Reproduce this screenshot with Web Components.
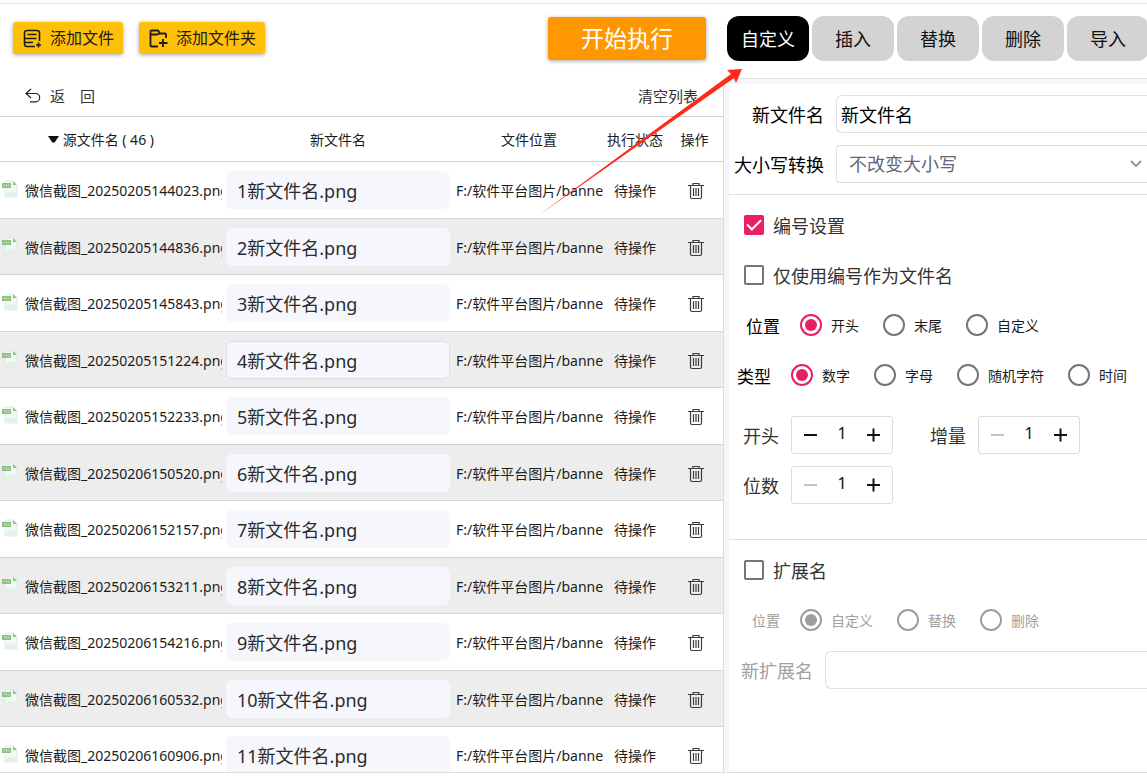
<!DOCTYPE html>
<html lang="zh-CN">
<head>
<meta charset="utf-8">
<meta name="viewport" content="width=device-width, initial-scale=1">
<title>批量重命名</title>
<style>
  body {
    margin: 0;
    overflow: hidden;
    background: #fff;
    color: #1c1c1c;
    font-family: "Noto Sans", "Noto Sans CJK SC", sans-serif;
    font-size: 14px;
  }
</style>
</head>
<body>
<rename-app></rename-app>

<script>
const FILES = [
  "20250205144023", "20250205144836", "20250205145843", "20250205151224",
  "20250205152233", "20250206150520", "20250206152157", "20250206153211",
  "20250206154216", "20250206160532", "20250206160906",
];

class ToolButton extends HTMLElement {
  connectedCallback() {
    this.attachShadow({mode: "open"});
    this.render();
  }

  render() {
    this.shadowRoot.innerHTML = `
      <style>
        :host {
          display: block;
        }

        button {
          display: flex;
          align-items: center;
          gap: 8px;
          height: 32px;
          padding: 0 9px 0 10px;
          border: 0;
          border-radius: 3px;
          background: #ffc107;
          box-shadow: 0 1px 4px rgba(0, 0, 0, .35);
          color: #1c1c1c;
          font: inherit;
          font-size: 16px;
          line-height: 24px;
          white-space: nowrap;
        }

        :host([variant="run"]) button {
          justify-content: center;
          width: 158px;
          height: 43px;
          padding: 0;
          background: #ff9800;
          color: #fff;
          font-size: 23px;
        }
      </style>
      <button type="button"><slot name="icon"></slot><slot></slot></button>
    `;
  }
}

class ModeTabs extends HTMLElement {
  connectedCallback() {
    this.attachShadow({mode: "open"});
    this.tabs = this.getAttribute("data-tabs").split(",");
    this.render();
  }

  render() {
    this.shadowRoot.innerHTML = `
      <style>
        :host {
          display: flex;
          gap: 3px;
        }

        button {
          flex: 0 0 82px;
          height: 45px;
          padding: 0 0 2px;
          border: 0;
          border-radius: 12px;
          background: #d3d3d3;
          color: #111;
          font: inherit;
          font-size: 18px;
        }

        button[aria-pressed="true"] {
          background: #000;
          color: #fff;
        }
      </style>
      ${this.tabs.map((tab, i) => `<button type="button" aria-pressed="${i === 0}">${tab}</button>`).join("")}
    `;
  }
}

class FileList extends HTMLElement {
  connectedCallback() {
    this.attachShadow({mode: "open"});
    this.render();
  }

  renderRow(stamp, index) {
    return `
      <tr>
        <td class="source">
          <div>
            <svg width="16" height="18" viewBox="0 0 16 18" aria-hidden="true">
              <path d="M3 1h8l4 4v12H3z" fill="#f3faf4" stroke="#d8e2d9" stroke-width=".7"/>
              <path d="M11 1v4h4z" fill="#8fc08f"/>
              <path d="M4 14l3-3 2 2 2-3 3 4v2H4z" fill="#e0f1e5"/>
              <path d="M0 3h9v5H0z" fill="#8dbf83"/>
              <path d="M2 6.500V4.500h1v1H2M4 6.500v-2l1 2v-2M7.500 4.500H6.300v2h1.200v-1" fill="none" stroke="#cfe6ca" stroke-width=".5"/>
            </svg>
            <span>微信截图_${stamp}.png</span>
          </div>
        </td>
        <td class="target"><input type="text" aria-label="新文件名" value="${index + 1}新文件名.png"></td>
        <td class="path"><div>F:/软件平台图片/banner</div></td>
        <td>待操作</td>
        <td class="remove">
          <button type="button" aria-label="删除">
            <svg width="16" height="18" viewBox="0 0 16 18" fill="none" stroke="#3c3c3c" aria-hidden="true">
              <path d="M0 3.500h16M5 3.500V1.500h6v2M2.500 3.500v11.500c0 1 .5 1.500 1.500 1.500h8c1 0 1.500-.5 1.500-1.500V3.500" stroke-width="1.200"/>
              <path d="M5.500 6v8M8 6v8M10.500 6v8" stroke-width="1.200"/>
            </svg>
          </button>
        </td>
      </tr>
    `;
  }

  render() {
    this.shadowRoot.innerHTML = `
      <style>
        :host {
          display: block;
          overflow: hidden;
        }

        .actions {
          display: flex;
          justify-content: space-between;
          align-items: center;
          box-sizing: border-box;
          height: 38px;
          padding: 0 25px 4px;
          border-bottom: 1px solid #d4d4d4;
        }

        button {
          display: inline-flex;
          align-items: center;
          gap: 9px;
          padding: 0;
          border: 0;
          background: none;
          color: #333;
          font: inherit;
          font-size: 15px;
          line-height: 18px;
          vertical-align: middle;
        }

        table {
          width: 100%;
          table-layout: fixed;
          border-collapse: separate;
          border-spacing: 0;
          line-height: 20px;
        }

        th,
        td {
          box-sizing: border-box;
          padding: 2px 0 0;
          border-bottom: 1px solid #d4d4d4;
          font-weight: normal;
          text-align: center;
          white-space: nowrap;
        }

        th {
          height: 45px;
        }

        th:first-child {
          padding-right: 20px;
        }

        tbody tr {
          height: 56px;
        }

        tbody tr:nth-child(odd) {
          height: 57px;
        }

        tbody tr:nth-child(even) {
          background: #ededed;
        }

        .source div {
          display: flex;
          align-items: center;
          gap: 7px;
          padding-left: 2px;
        }

        .source svg {
          flex: none;
          margin-bottom: 4px;
        }

        .source span {
          overflow: hidden;
          width: 197px;
          text-align: left;
        }

        .target {
          padding: 0 4px;
        }

        .target input {
          display: block;
          box-sizing: border-box;
          width: 100%;
          height: 38px;
          padding: 0 10px;
          border: 1px solid #f5f7fc;
          border-radius: 6px;
          background: #f5f7fc;
          color: #2b2b2b;
          font: inherit;
          font-size: 18px;
        }

        tr:nth-child(4) input {
          border-color: #dcdfe6;
        }

        .path {
          padding-left: 2px;
          text-align: left;
        }

        .path div {
          overflow: hidden;
        }

        .remove {
          padding: 0 0 0 2px;
        }
      </style>
      <div class="actions">
        <button type="button">
          <svg width="16" height="15" viewBox="0 0 16 15" fill="none" stroke="#222" stroke-width="1.200" aria-hidden="true">
            <path d="M6 1L1 5.500 6 10M1 5.500h9.500a4.200 4.200 0 0 1 0 8.400H5"/>
          </svg>返&emsp;回</button>
        <button type="button">清空列表</button>
      </div>
      <table>
        <colgroup>
          <col style="width: 222px"><col style="width: 232px"><col><col style="width: 62px"><col style="width: 57px">
        </colgroup>
        <thead>
          <tr>
            <th><svg width="11" height="9" viewBox="0 0 11 9" aria-hidden="true"><path d="M0 0h11L7 6q-1.500 1.500-3 0z" fill="#111"/></svg> 源文件名 ( 46 )</th>
            <th>新文件名</th>
            <th>文件位置</th>
            <th>执行状态</th>
            <th>操作</th>
          </tr>
        </thead>
        <tbody>${FILES.map((stamp, i) => this.renderRow(stamp, i)).join("")}</tbody>
      </table>
    `;
  }
}

class CheckOption extends HTMLElement {
  connectedCallback() {
    this.attachShadow({mode: "open"});
    this.render();
  }

  render() {
    this.shadowRoot.innerHTML = `
      <style>
        :host {
          display: flex;
          align-items: center;
          height: 50px;
          padding-left: 15px;
        }

        label {
          display: flex;
          align-items: center;
          gap: 9px;
          color: #333;
          font-size: 18px;
        }

        input {
          appearance: none;
          display: grid;
          place-items: center;
          box-sizing: border-box;
          width: 20px;
          height: 20px;
          margin: 0;
          border: 2px solid #757575;
          border-radius: 2px;
        }

        input:checked {
          border-color: #e91e63;
          background: #e91e63;
        }

        input:checked::before {
          content: "";
          width: 12px;
          height: 6px;
          margin-bottom: 4px;
          border: solid #fff;
          border-width: 0 0 2px 2px;
          transform: rotate(-45deg);
        }
      </style>
      <label><input type="checkbox" ${this.hasAttribute("checked") ? "checked" : ""}><slot></slot></label>
    `;
  }
}

class RadioRow extends HTMLElement {
  connectedCallback() {
    this.attachShadow({mode: "open"});
    this.options = this.getAttribute("data-options").split(",");
    this.render();
  }

  render() {
    const disabled = this.hasAttribute("disabled") ? "disabled" : "";
    this.shadowRoot.innerHTML = `
      <style>
        :host {
          display: block;
          padding-left: 8px;
        }

        :host([indent]) {
          padding-left: 17px;
        }

        :host([disabled]) {
          padding-left: 23px;
          color: #a0a0a0;
        }

        .row {
          display: flex;
          align-items: center;
          gap: 20px;
          height: 50px;
          white-space: nowrap;
        }

        .title {
          color: #000;
          font-size: 17px;
        }

        :host([disabled]) .title {
          color: inherit;
          font-size: 14px;
        }

        .options {
          display: flex;
          gap: 24px;
        }

        label {
          display: flex;
          align-items: center;
          gap: 9px;
        }

        input {
          --ring: #757575;
          appearance: none;
          display: grid;
          place-items: center;
          box-sizing: border-box;
          width: 22px;
          height: 22px;
          margin: 0;
          border: 2px solid var(--ring);
          border-radius: 50%;
        }

        input:checked {
          --ring: #e91e63;
        }

        input:disabled {
          --ring: #9e9e9e;
        }

        input:checked::before {
          content: "";
          width: 12px;
          height: 12px;
          border-radius: 50%;
          background: var(--ring);
        }
      </style>
      <div class="row" role="radiogroup" aria-labelledby="title">
        <span class="title" id="title"><slot></slot></span>
        <div class="options">
          ${this.options.map((option, i) => `
            <label><input type="radio" name="option" ${i === 0 ? "checked" : ""} ${disabled}>${option}</label>
          `).join("")}
        </div>
      </div>
    `;
  }
}

class NumberStepper extends HTMLElement {
  connectedCallback() {
    this.attachShadow({mode: "open"});
    this.render();
  }

  render() {
    this.shadowRoot.innerHTML = `
      <style>
        :host {
          display: flex;
          align-items: center;
          gap: 12px;
          height: 50px;
        }

        label {
          color: #333;
          font-size: 18px;
        }

        .box {
          display: flex;
          box-sizing: border-box;
          width: 102px;
          height: 38px;
          border: 1px solid #dcdcdc;
          border-radius: 3px;
        }

        button {
          display: grid;
          place-items: center;
          flex: 0 0 36px;
          padding: 0;
          border: 0;
          background: none;
          color: #111;
        }

        button:disabled {
          color: #c4c4c4;
        }

        input {
          flex: 1;
          min-width: 0;
          box-sizing: border-box;
          padding: 0 0 4px;
          border: 0;
          background: none;
          color: #111;
          font: inherit;
          font-size: 16px;
          text-align: center;
        }
      </style>
      <label for="value"><slot></slot></label>
      <div class="box">
        <button type="button" aria-label="减少" ${this.hasAttribute("at-min") ? "disabled" : ""}>
          <svg width="14" height="14" viewBox="0 0 14 14" stroke="currentColor" stroke-width="2"><path d="M1 7h13"/></svg>
        </button>
        <input id="value" type="text" inputmode="numeric" value="1">
        <button type="button" aria-label="增加">
          <svg width="14" height="14" viewBox="0 0 14 14" stroke="currentColor" stroke-width="2"><path d="M0 7h13M6.500 0.500v13"/></svg>
        </button>
      </div>
    `;
  }
}

class FormField extends HTMLElement {
  connectedCallback() {
    this.attachShadow({mode: "open"});
    this.render();
  }

  renderControl() {
    if (this.getAttribute("type") === "select") {
      return `
        <select id="control"><option>${this.getAttribute("value")}</option></select>
        <svg width="12" height="8" viewBox="0 0 12 8" fill="none" stroke="#999" stroke-width="2" aria-hidden="true">
          <path d="M1 1l5 5 5-5"/>
        </svg>
      `;
    }
    return `<input id="control" type="text" value="${this.getAttribute("value") || ""}"
      ${this.hasAttribute("disabled") ? "disabled" : ""}>`;
  }

  render() {
    this.shadowRoot.innerHTML = `
      <style>
        :host {
          display: flex;
          align-items: center;
          gap: 12px;
        }

        label {
          flex: 0 0 95px;
          color: #000;
          font-size: 18px;
          text-align: right;
          white-space: nowrap;
        }

        :host([disabled]) {
          height: 50px;
        }

        :host([disabled]) label {
          flex-basis: 84px;
          color: #a0a0a0;
        }

        .control {
          display: grid;
          flex: 1;
          align-items: center;
        }

        .control > * {
          grid-area: 1 / 1;
        }

        input,
        select {
          appearance: none;
          box-sizing: border-box;
          width: 100%;
          height: 38px;
          padding: 0 4px;
          border: 1px solid #dcdfe6;
          border-right: 0;
          border-radius: 6px 0 0 6px;
          background: #fff;
          color: #000;
          font: inherit;
          font-size: 18px;
        }

        select {
          padding: 0 12px;
          border-radius: 4px 0 0 4px;
          color: #606778;
        }

        svg {
          justify-self: end;
          margin-right: 5px;
          pointer-events: none;
        }
      </style>
      <label for="control"><slot></slot></label>
      <div class="control">${this.renderControl()}</div>
    `;
  }
}

class RuleForm extends HTMLElement {
  connectedCallback() {
    this.attachShadow({mode: "open"});
    this.render();
  }

  render() {
    this.shadowRoot.innerHTML = `
      <style>
        :host {
          display: block;
          border: solid #f5f6fa;
          border-width: 5px 0 0 5px;
        }

        section {
          padding: 5px 0;
          border-bottom: 1px solid #dedede;
        }

        section:last-child {
          border: 0;
        }

        .fields {
          display: grid;
          gap: 12px;
          padding: 11px 0;
        }

        .steppers {
          display: grid;
          grid-template-columns: 150px 150px;
          column-gap: 37px;
          padding: 10px 0 24px 14px;
        }
      </style>
      <section class="fields">
        <form-field value="新文件名">新文件名</form-field>
        <form-field type="select" value="不改变大小写">大小写转换</form-field>
      </section>
      <section>
        <check-option checked>编号设置</check-option>
        <check-option>仅使用编号作为文件名</check-option>
        <radio-row indent data-options="开头,末尾,自定义">位置</radio-row>
        <radio-row data-options="数字,字母,随机字符,时间">类型</radio-row>
        <div class="steppers">
          <number-stepper>开头</number-stepper>
          <number-stepper at-min>增量</number-stepper>
          <number-stepper at-min>位数</number-stepper>
        </div>
      </section>
      <section>
        <check-option>扩展名</check-option>
        <radio-row disabled data-options="自定义,替换,删除">位置</radio-row>
        <form-field disabled>新扩展名</form-field>
      </section>
    `;
  }
}

// Red pointer drawn over the page, from the file rows up to the active tab
class PointerArrow extends HTMLElement {
  connectedCallback() {
    this.attachShadow({mode: "open"});
    this.shadowRoot.innerHTML = `
      <style>
        :host {
          position: absolute;
          top: 68px;
          right: 404px;
          pointer-events: none;
        }

        svg {
          display: block;
        }
      </style>
      <svg width="204" height="148" viewBox="0 0 204 148" aria-hidden="true">
        <path d="M0 147L192 6 188 2 203 1 197 15 195 10z" fill="#ff2a17"/>
      </svg>
    `;
  }
}

class RenameApp extends HTMLElement {
  connectedCallback() {
    this.attachShadow({mode: "open"});
    this.render();
  }

  render() {
    this.shadowRoot.innerHTML = `
      <style>
        :host {
          position: relative;
          display: grid;
          grid-template: 76px minmax(0, 1fr) / minmax(0, 1fr) 423px;
          box-sizing: border-box;
          height: 100vh;
          padding-top: 3px;
          padding-bottom: 6px;
        }

        header {
          display: flex;
          align-items: center;
          gap: 16px;
          box-sizing: border-box;
          padding: 0 18px 7px 13px;
          border-top: 1px solid #e4e4e4;
        }

        .run {
          margin-left: auto;
        }

        nav {
          overflow: hidden;
          box-sizing: border-box;
          padding: 12px 0 0 3px;
          border: solid #e4e4e4;
          border-width: 1px 0;
        }

        file-list {
          border-right: 1px solid #dcdde3;
          border-bottom: 1px solid #dedede;
        }

        rule-form {
          border-bottom: 1px solid #dedede;
        }
      </style>
      <header>
        <tool-button>
          <svg slot="icon" width="19" height="19" viewBox="0 0 19 19" fill="none" stroke="#1c1c1c" stroke-width="1.600" aria-hidden="true">
            <path d="M12 17.500H4Q1.500 17.500 1.500 15V4Q1.500 1.500 4 1.500h10Q16.500 1.500 16.500 4v8M4.500 5.500h9M2 9.500h11.500M2 13.500h8M15.500 13.500v5M13 16h5"/>
          </svg>添加文件
        </tool-button>
        <tool-button>
          <svg slot="icon" width="19" height="19" viewBox="0 0 19 19" fill="none" stroke="#1c1c1c" stroke-width="1.800" aria-hidden="true">
            <path d="M9 17.500H2.500Q1.500 17.500 1.500 16.500v-14Q1.500 1.500 2.500 1.500h6.500l2 3h5Q17 4.500 17 5.500V9M2 5.500h6l3-1M14 10v8M10 14h8.500"/>
          </svg>添加文件夹
        </tool-button>
        <tool-button class="run" variant="run">开始执行</tool-button>
      </header>
      <nav><mode-tabs data-tabs="自定义,插入,替换,删除,导入"></mode-tabs></nav>
      <file-list></file-list>
      <rule-form></rule-form>
      <pointer-arrow></pointer-arrow>
    `;
  }
}

customElements.define("tool-button", ToolButton);
customElements.define("mode-tabs", ModeTabs);
customElements.define("file-list", FileList);
customElements.define("check-option", CheckOption);
customElements.define("radio-row", RadioRow);
customElements.define("number-stepper", NumberStepper);
customElements.define("form-field", FormField);
customElements.define("rule-form", RuleForm);
customElements.define("pointer-arrow", PointerArrow);
customElements.define("rename-app", RenameApp);
</script>
</body>
</html>
